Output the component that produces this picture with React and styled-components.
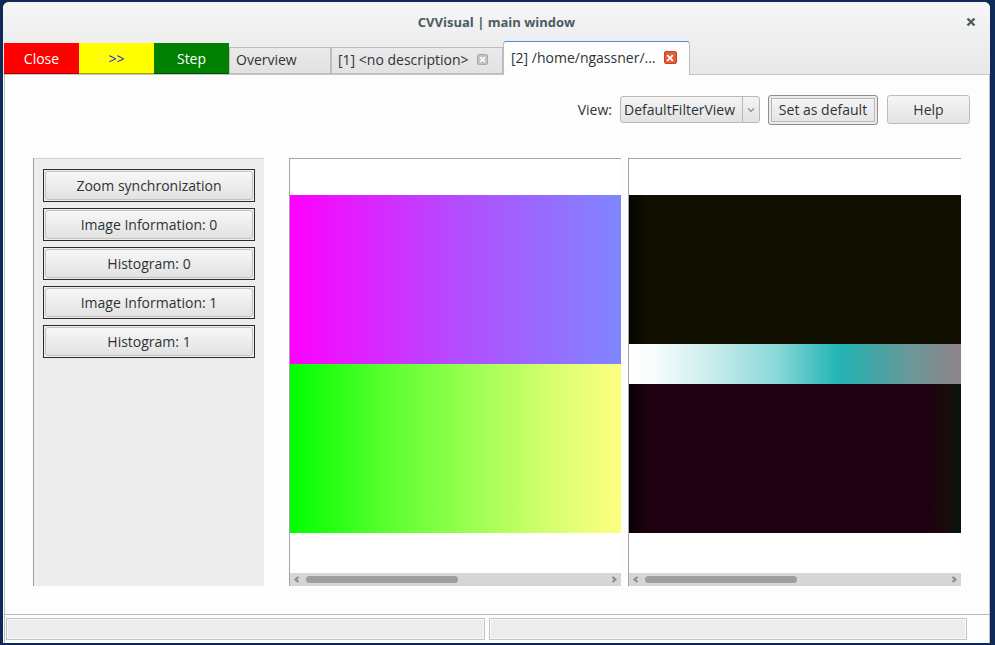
import React from "react";
import styled, { createGlobalStyle } from "styled-components";

const Global = createGlobalStyle`
  html, body {
    margin: 0;
    padding: 0;
    background: #0e2a58;
  }
  body {
    font-family: "Open Sans", "DejaVu Sans", sans-serif;
    color: #2e3436;
  }
`;

const Window = styled.div`
  margin: 2px 0 0 3px;
  width: 987px;
  height: 641px;
  background: #fdfdfd;
  border-radius: 6px 6px 0 0;
  display: flex;
  flex-direction: column;
  overflow: hidden;
`;

const Chrome = styled.div`
  background: linear-gradient(#f6f6f6, #e8e8e8);
  border-bottom: 1px solid #c4c4c4;
`;

const TitleBar = styled.div`
  height: 39px;
  display: flex;
  align-items: center;
  justify-content: center;
  position: relative;
  font-size: 13px;
  font-weight: 700;
  color: #4c5b62;
`;

const CloseX = styled.div`
  position: absolute;
  right: 14px;
  top: 15px;
  width: 10px;
  height: 10px;
  display: flex;
`;

const TabBar = styled.div`
  height: 33px;
  display: flex;
  align-items: flex-end;
  padding-left: 1px;
`;

const ColorButton = styled.div`
  width: 75px;
  height: 31px;
  background: ${(p) => p.$bg};
  color: ${(p) => p.$fg};
  border-bottom: 1px solid rgba(0, 0, 0, 0.35);
  box-sizing: border-box;
  display: flex;
  align-items: center;
  justify-content: center;
  font-size: 14px;
`;

const Tab = styled.div`
  box-sizing: border-box;
  height: ${(p) => (p.$active ? "34px" : "27px")};
  margin-bottom: ${(p) => (p.$active ? "-1px" : "0")};
  width: ${(p) => p.$w}px;
  background: ${(p) => (p.$active ? "#fdfdfd" : "linear-gradient(#eaeaea, #e2e2e2)")};
  border: 1px solid #bdbdbd;
  border-bottom: ${(p) => (p.$active ? "none" : "1px solid #bdbdbd")};
  border-top: 1px solid ${(p) => (p.$active ? "#4a90d9" : "#bdbdbd")};
  border-radius: ${(p) => (p.$active ? "3px 3px 0 0" : "0")};
  display: flex;
  align-items: center;
  gap: 8px;
  padding: ${(p) => (p.$active ? "0 0 2px 7px" : "0 0 2px 6px")};
  font-size: 14px;
  color: #2e3436;
  position: relative;
  z-index: ${(p) => (p.$active ? 2 : 1)};
`;

const TabClose = styled.span`
  width: ${(p) => (p.$active ? 13 : 11)}px;
  height: ${(p) => (p.$active ? 13 : 11)}px;
  box-sizing: border-box;
  border-radius: 2px;
  background: ${(p) => (p.$active ? "#e45c3a" : "#c2c2c2")};
  border: 1px solid ${(p) => (p.$active ? "#c54523" : "#a8a8a8")};
  display: flex;
  align-items: center;
  justify-content: center;
`;

const Body = styled.div`
  flex: 1;
  display: flex;
  flex-direction: column;
  border-left: 1px solid #bdbdbd;
  border-right: 1px solid #bdbdbd;
  margin-left: 1px;
`;

const ViewRow = styled.div`
  display: flex;
  justify-content: flex-end;
  align-items: center;
  gap: 8px;
  padding: 20px 19px 1px 0;
  height: 29px;
`;

const Label = styled.span`
  font-size: 14px;
`;

const Combo = styled.div`
  box-sizing: border-box;
  width: 140px;
  height: 27px;
  border: 1px solid #b8b8b8;
  border-radius: 3px;
  background: linear-gradient(#f4f4f4, #e2e2e2);
  display: flex;
  align-items: center;
  font-size: 14px;
  padding-left: 3px;
`;

const ComboText = styled.span`
  flex: 1;
`;

const ComboArrow = styled.span`
  width: 16px;
  height: 100%;
  border-left: 1px solid #b8b8b8;
  display: flex;
  align-items: center;
  justify-content: center;
`;

const Button = styled.div`
  box-sizing: border-box;
  width: ${(p) => p.$w}px;
  height: ${(p) => (p.$default ? 30 : 29)}px;
  border: 1px solid ${(p) => (p.$default ? "#8c8c8c" : "#bcbcbc")};
  border-radius: 3px;
  background: linear-gradient(#f6f6f6, #e3e3e3);
  display: flex;
  align-items: center;
  justify-content: center;
  font-size: 14px;
  box-shadow: ${(p) => (p.$default ? "inset 0 0 0 2px #ececec, inset 0 0 0 3px #b8b8b8" : "none")};
  margin-left: ${(p) => p.$ml || 0}px;
`;

const Main = styled.div`
  display: flex;
  align-items: flex-start;
  padding: 33px 0 0 28px;
  height: 428px;
`;

const Panel = styled.div`
  box-sizing: border-box;
  width: 231px;
  height: 428px;
  background: #ededed;
  border-left: 1px solid #9c9c9c;
  border-top: 1px solid #d0d0d0;
  padding: 10px 9px;
  display: flex;
  flex-direction: column;
  gap: 6px;
`;

const PanelButton = styled.div`
  box-sizing: border-box;
  height: 33px;
  border: 1px solid #2c2c2c;
  padding: 1px;
  display: flex;
`;

const PanelInner = styled.div`
  flex: 1;
  border: 1px solid #c2c2c2;
  border-radius: 3px;
  background: linear-gradient(#f7f7f7, #e2e2e2);
  display: flex;
  align-items: center;
  justify-content: center;
  font-size: 14px;
`;

const ImageView = styled.div`
  box-sizing: border-box;
  width: ${(p) => p.$w}px;
  height: 428px;
  margin-left: ${(p) => p.$ml}px;
  border-left: 1px solid #a4a4a4;
  border-top: 1px solid #a4a4a4;
  background: #ffffff;
  display: flex;
  flex-direction: column;
`;

const Canvas = styled.div`
  flex: 1;
  padding-top: 36px;
`;

const Band = styled.div`
  height: ${(p) => p.$h}px;
  background: ${(p) => p.$bg};
`;

const ScrollBar = styled.div`
  height: 13px;
  background: #d6d6d6;
  display: flex;
  align-items: center;
  position: relative;
`;

const Arrow = styled.span`
  position: absolute;
  top: 2px;
  ${(p) => (p.$right ? "right: 3px;" : "left: 3px;")}
  width: 8px;
  height: 9px;
  display: flex;
`;

const Thumb = styled.div`
  margin-left: 16px;
  width: 152px;
  height: 7px;
  border-radius: 4px;
  background: #9e9e9e;
`;

const StatusRow = styled.div`
  border-top: 1px solid #b8b8b8;
  margin-top: 28px;
  height: 28px;
  display: flex;
  align-items: center;
  gap: 4px;
  padding: 0 22px 0 1px;
  background: #fdfdfd;
`;

const StatusCell = styled.div`
  flex: 1;
  height: 22px;
  box-sizing: border-box;
  border: 1px solid #c4c4c4;
  background: #ececec;
  box-shadow: inset 0 0 0 1px #f8f8f8;
`;

const Chevron = ({ dir }) => (
  <svg width="8" height="9" viewBox="0 0 8 9">
    <path
      d={dir === "right" ? "M2.5 2 L5.5 4.5 L2.5 7" : "M5.5 2 L2.5 4.5 L5.5 7"}
      fill="none"
      stroke="#8a8a8a"
      strokeWidth="2"
    />
  </svg>
);

const Scroller = () => (
  <ScrollBar>
    <Arrow>
      <Chevron dir="left" />
    </Arrow>
    <Thumb />
    <Arrow $right>
      <Chevron dir="right" />
    </Arrow>
  </ScrollBar>
);

const SmallX = ({ color, size = 7 }) => (
  <svg width={size} height={size} viewBox="0 0 7 7" style={{ display: "block" }}>
    <path d="M1 1 L6 6 M6 1 L1 6" stroke={color} strokeWidth="1.6" />
  </svg>
);

const panelButtons = [
  "Zoom synchronization",
  "Image Information: 0",
  "Histogram: 0",
  "Image Information: 1",
  "Histogram: 1",
];

export default function App() {
  return (
    <>
      <Global />
      <Window>
        <Chrome>
          <TitleBar>
            CVVisual | main window
            <CloseX>
              <svg width="10" height="10" viewBox="0 0 10 10">
                <path d="M1.5 1.5 L8.5 8.5 M8.5 1.5 L1.5 8.5" stroke="#4c5b62" strokeWidth="2.4" />
              </svg>
            </CloseX>
          </TitleBar>
          <TabBar>
            <ColorButton $bg="#ff0000" $fg="#ffffff">Close</ColorButton>
            <ColorButton $bg="#ffff00" $fg="#1a1aff">&gt;&gt;</ColorButton>
            <ColorButton $bg="#008000" $fg="#ffffff">Step</ColorButton>
            <Tab $w={102}>Overview</Tab>
            <Tab $w={172}>
              [1] &lt;no description&gt;
              <TabClose>
                <SmallX color="#ffffff" />
              </TabClose>
            </Tab>
            <Tab $w={187} $active>
              [2] /home/ngassner/...
              <TabClose $active>
                <SmallX color="#ffffff" size={8} />
              </TabClose>
            </Tab>
          </TabBar>
        </Chrome>
        <Body>
          <ViewRow>
            <Label>View:</Label>
            <Combo>
              <ComboText>DefaultFilterView</ComboText>
              <ComboArrow>
                <svg width="8" height="6" viewBox="0 0 8 6">
                  <path d="M1 1.5 L4 4.5 L7 1.5" fill="none" stroke="#8a8a8a" strokeWidth="1.2" />
                </svg>
              </ComboArrow>
            </Combo>
            <Button $w={110} $default>Set as default</Button>
            <Button $w={83} $ml={1}>Help</Button>
          </ViewRow>
          <Main>
            <Panel>
              {panelButtons.map((b) => (
                <PanelButton key={b}>
                  <PanelInner>{b}</PanelInner>
                </PanelButton>
              ))}
            </Panel>
            <ImageView $w={332} $ml={25}>
              <Canvas>
                <Band $h={169} $bg="linear-gradient(to right, #ff00ff, #b44cff 50%, #7f86ff)" />
                <Band $h={169} $bg="linear-gradient(to right, #00ff00, #5cff30 30%, #a8ff58 60%, #d8ff70 80%, #ffff80)" />
              </Canvas>
              <Scroller />
            </ImageView>
            <ImageView $w={333} $ml={7}>
              <Canvas>
                <Band $h={149} $bg="linear-gradient(to right, #060602, #100f00 6%, #100f00)" />
                <Band
                  $h={40}
                  $bg="linear-gradient(to right, #ffffff 0%, #f6fcfc 8%, #c9ecec 25%, #88d7d7 45%, #22b4b4 63%, #3fa5a5 73%, #6c9898 85%, #8e8288 100%)"
                />
                <Band
                  $h={149}
                  $bg="linear-gradient(to right, #0a0006, #1e0010 6%, #1e0010 90%, #1a0a0c 95%, #081408 100%)"
                />
              </Canvas>
              <Scroller />
            </ImageView>
          </Main>
          <StatusRow>
            <StatusCell />
            <StatusCell />
          </StatusRow>
        </Body>
      </Window>
    </>
  );
}
